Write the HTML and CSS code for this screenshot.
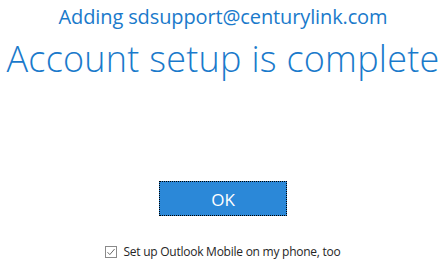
FILE: index.html
```html
<!DOCTYPE html>
<html>
<head>
<meta charset="utf-8">
<link rel="stylesheet" href="styles.css">
</head>
<body>
<main class="page">
  <div class="adding">Adding sdsupport@centurylink.com</div>
  <h1 class="title">Account setup is complete</h1>
  <div class="spacer"></div>
  <button class="ok" type="button">OK</button>
  <label class="mobile">
    <span class="box"><svg width="12" height="12" viewBox="0 0 12 12"><path d="M2.5 6.2 L4.8 8.6 L9.6 3" fill="none" stroke="#6a6a6a" stroke-width="1"/></svg></span>
    <span class="mobile-text">Set up Outlook Mobile on my phone, too</span>
  </label>
</main>
</body>
</html>
```
FILE: styles.css
```css
html, body {
  margin: 0;
  padding: 0;
  background: #ffffff;
}
.page {
  width: 446px;
  height: 261px;
  display: flex;
  flex-direction: column;
  align-items: center;
  font-family: "Open Sans", "Noto Sans", sans-serif;
  color: #1a7acb;
  box-sizing: border-box;
}
.adding {
  margin-top: 5px;
  font-size: 20px;
  line-height: 24px;
  font-weight: 400;
  letter-spacing: -0.12px;
}
.title {
  margin: 10px 0 0 0;
  font-size: 36px;
  line-height: 40px;
  font-weight: 300;
  letter-spacing: 0.25px;
  white-space: nowrap;
}
.spacer {
  flex: 1;
}
.ok {
  width: 128px;
  height: 35px;
  background: #2b88d8;
  color: #ffffff;
  border: none;
  outline: 1px dotted #000000;
  outline-offset: -1px;
  font-family: "Open Sans", sans-serif;
  font-size: 17px;
  padding: 1px 0 0 0;
  margin-bottom: 28px;
}
.mobile {
  display: flex;
  align-items: center;
  gap: 6px;
  margin-bottom: 1px;
  color: #262626;
  font-size: 12px;
  line-height: 16px;
  letter-spacing: -0.25px;
}
.box {
  width: 12px;
  height: 12px;
  border: 1px solid #8a8a8a;
  box-sizing: border-box;
  display: flex;
}
.box svg { display: block; margin: -1px; }
```
